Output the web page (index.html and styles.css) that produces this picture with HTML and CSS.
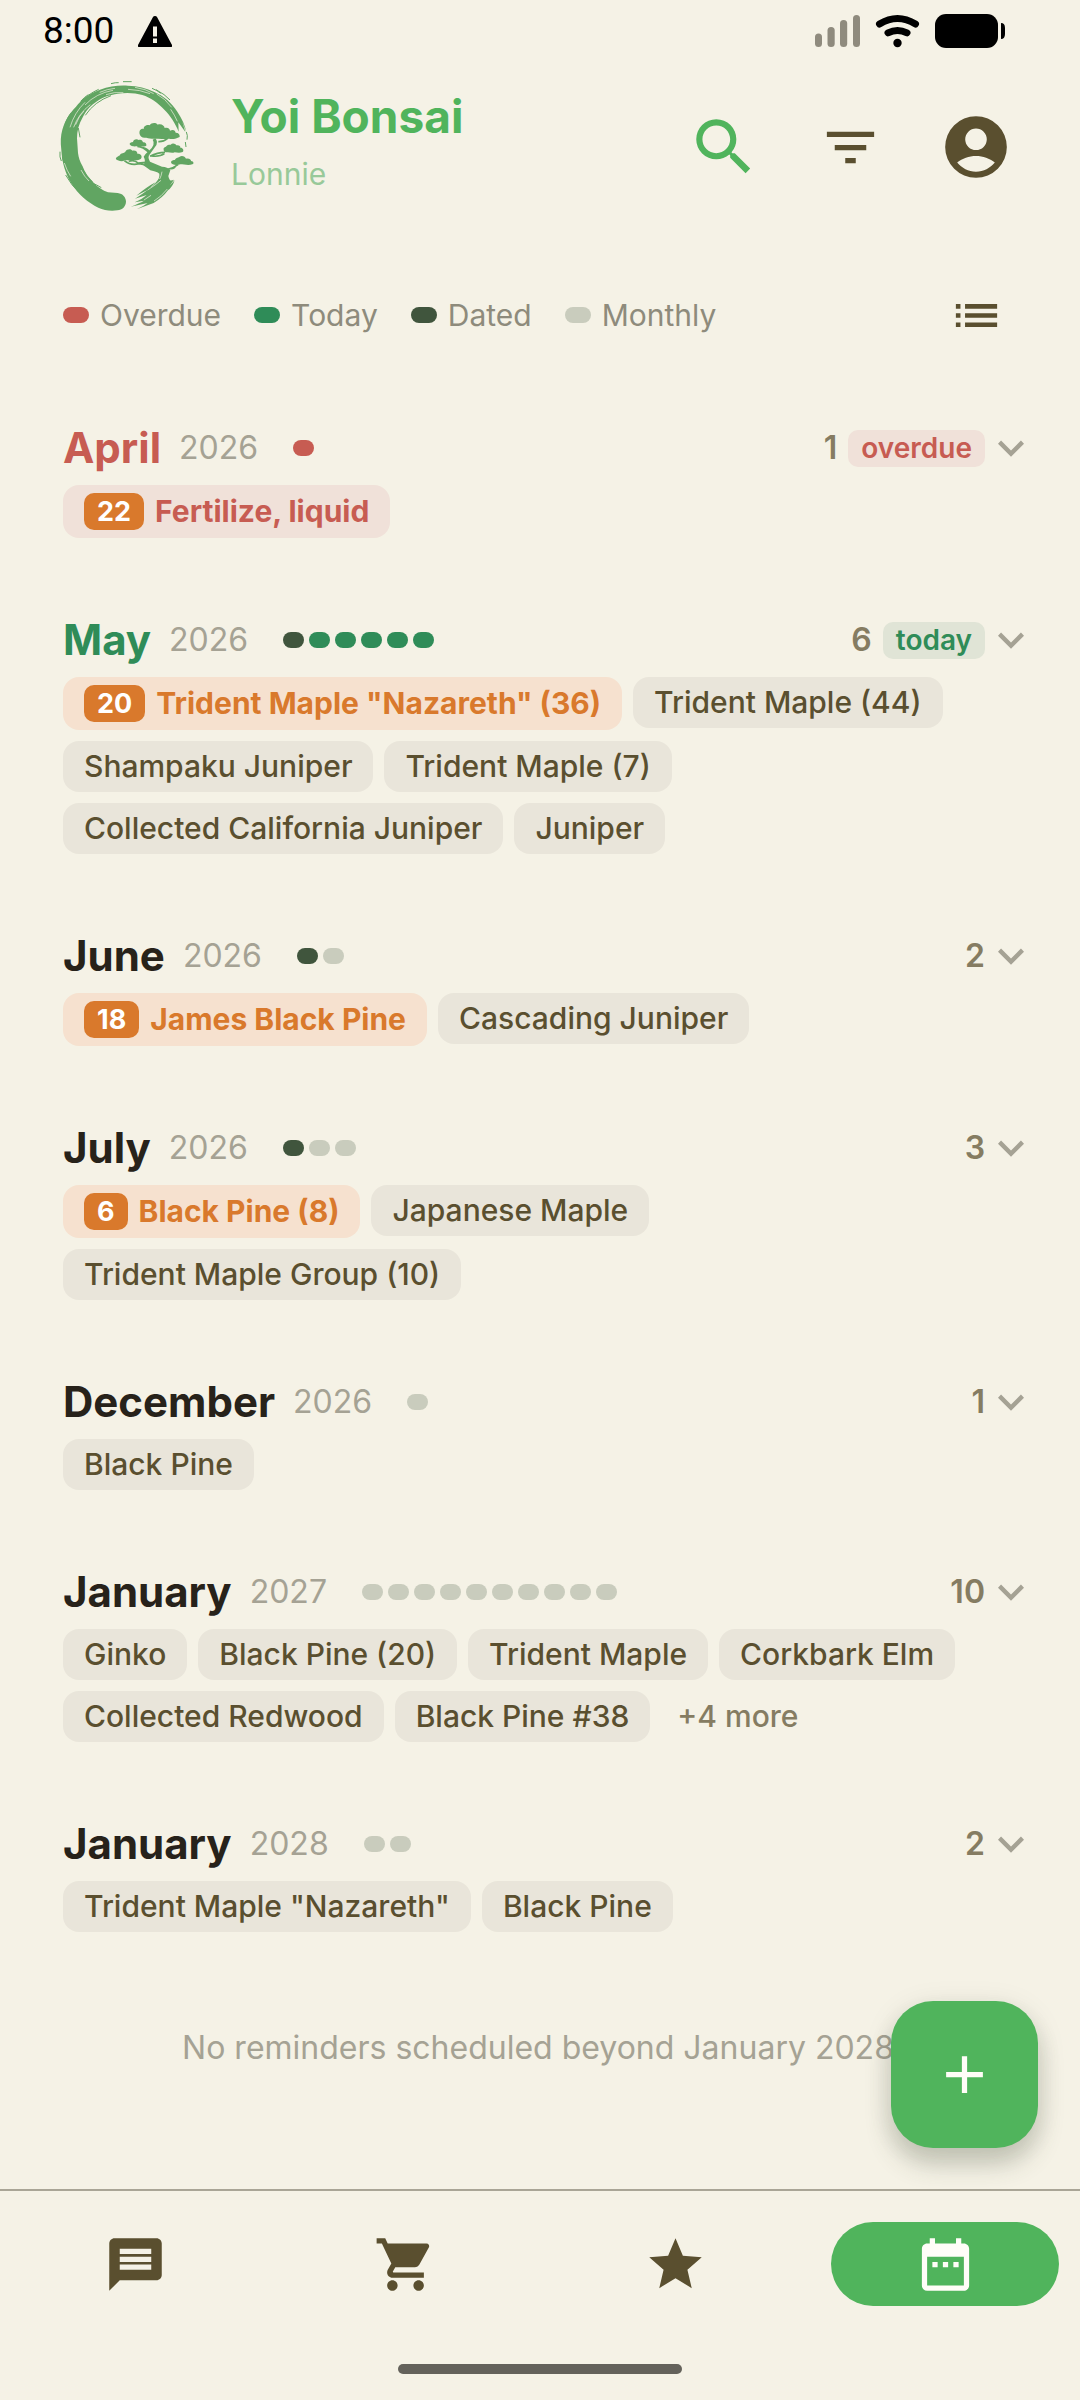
FILE: index.html
```html
<!DOCTYPE html>
<html lang="en">
<head>
<meta charset="utf-8">
<meta name="viewport" content="width=device-width, initial-scale=1">
<title>Yoi Bonsai</title>
<link rel="stylesheet" href="styles.css">
</head>
<body>
<svg width="0" height="0" class="defs" aria-hidden="true">
  <symbol id="chevron" viewBox="0 0 24 24"><path d="M16.59 8.59 12 13.17 7.41 8.59 6 10l6 6 6-6z"/></symbol>
</svg>
<div class="page">
  <div class="status">
    <span class="clock">8:00</span>
    <svg class="warn" viewBox="0 0 34 31" aria-label="Warning"><path d="M17 0q1.500 0 2 1l15 28q.5 2-1 2H1q-1.500 0-1-2L15 1q.5-1 2-1z"/><path class="cut" d="M15 10.500h4v10h-4zM15 22.500h4v4.500h-4z"/></svg>
    <svg class="signals" viewBox="0 0 190 34" aria-label="Signal, Wi-Fi and battery">
      <g class="weak"><rect x="0" y="19.500" width="7" height="13.500" rx="3.500"/><rect x="12.500" y="13" width="7.200" height="20" rx="3.500"/><rect x="25" y="6" width="7.200" height="27" rx="3.500"/><rect x="38" y="1" width="7" height="32" rx="3.500"/></g>
      <path class="arc" d="M64.500 10Q82.500-1 100.500 10M73 18.800q9.500-4.600 19 0"/><circle cx="82.500" cy="29" r="4.200"/>
      <rect x="120" y="0" width="63" height="34" rx="11"/><path d="M186 9q4 0 4 5v6q0 5-4 5z"/>
    </svg>
  </div>

  <header class="header">
    <svg class="logo" viewBox="0 12 510 498" aria-label="Bonsai tree inside a brushed circle">
      <path d="M258 424C258 440 247 450 232 451C212 454 192 451 175 443C145 429 113 402 94 370C76 341 66 307 64 270C61 245 62 226 67 209C75 182 88 160 108 140C125 118 150 99 180 89C208 79 237 75 264 77C293 78 320 84 343 96C372 108 395 129 412 155C426 176 435 195 439 217L427 185L436 216L415 187L416 215C407 192 391 166 373 149C354 129 332 113 307 105C286 98 256 97 234 101C208 104 183 113 164 129C150 138 137 154 129 170C116 192 111 213 111 235L114 279C116 293 120 306 127 317C135 338 147 354 161 368C174 382 188 391 204 397L233 399C249 401 257 412 258 424Z"/>
      <g class="streak">
        <path d="M120 129Q144 102 176 88M122 124Q132 112 145 104M213 71Q227 67 236 68M249 65L275 65M336 85Q352 91 362 100M348 89Q375 103 390 120M94 158Q83 170 76 190M99 161Q88 175 82 193M60 275Q58 292 64 303M67 290Q68 298 71 307M77 345Q94 377 120 399M439 216Q444 226 441 239M436 246L438 261M123 315Q135 347 158 366M158 370Q168 373 184 383M136 166Q163 125 213 107M120 232L115 204"/>
      </g>
      <path class="cutline" d="M90 202Q103 158 135 127M101 202Q116 160 151 134M107 194Q117 167 132 153M135 135Q168 100 219 91M198 104Q222 95 250 98M264 88Q300 89 330 101M285 82Q318 87 341 101M350 102Q375 115 395 142M392 148Q404 165 412 184M123 330Q133 350 147 363M73 309Q81 333 92 349M179 97Q202 87 225 85"/>
      <path d="M299 223C296 210 305 205 312 207C308 199 322 193 329 196C334 187 350 188 353 194C364 190 373 197 374 204C384 201 390 207 390 212C400 207 406 212 407 218C416 218 420 224 419 231C409 236 398 239 387 236C377 239 365 236 354 236C341 236 329 237 319 233C307 235 302 231 299 223Z"/>
      <path d="M269 253C269 246 277 247 279 246C279 239 290 235 296 240C304 236 309 244 309 247C316 246 320 251 319 257C310 261 298 259 290 259C282 260 272 259 269 253Z"/>
      <path d="M371 269C369 262 379 261 379 259C382 253 390 254 392 254C397 248 406 250 409 256C417 254 422 259 421 263C428 262 433 271 428 276C420 280 411 278 404 277C395 281 388 276 382 277C374 277 371 275 371 269Z"/>
      <path d="M228 298C226 291 238 288 240 285C243 278 252 281 256 275C261 265 275 266 277 272C288 270 293 277 292 281C302 281 307 287 304 294C302 299 293 302 285 300L254 301C247 306 234 303 228 298Z"/>
      <path d="M393 307C393 301 401 300 405 299C408 292 417 293 419 290C427 285 436 291 438 296C449 294 454 301 453 303C462 304 462 312 457 313C446 318 431 313 421 313C410 317 394 315 393 307Z"/>
      <path d="M346 235Q357 247 345 261L330 282Q321 291 330 305L366 320Q383 320 391 331L385 348Q386 355 390 361Q395 362 402 359L389 377L404 361Q397 382 384 391Q368 413 341 429L290 448Q311 438 323 429L272 440Q298 430 312 422L284 427Q308 416 320 405L285 416Q314 397 324 389L289 407Q321 380 348 366Q360 355 358 341Q350 335 331 331L310 316Q319 304 311 290Q317 280 327 272Q348 254 338 239Z"/>
      <g class="branch"><path d="M355 245Q370 246 383 235M292 259Q310 260 325 276M308 263Q322 266 328 276M330 289Q352 277 375 277M373 281Q360 291 334 288M253 302Q273 318 297 311L318 315M266 304Q283 298 294 309L318 307M383 328Q401 324 414 314M390 326Q403 328 409 315"/></g>
      <path class="cutline" d="M354 354Q348 370 333 382M366 335Q364 348 359 357M323 390Q348 374 363 361M342 423Q365 409 382 387M312 420L333 406"/>
    </svg>
    <div class="brand">
      <h1 class="title">Yoi Bonsai</h1>
      <p class="owner">Lonnie</p>
    </div>
    <button class="iconbtn search" aria-label="Search"><svg class="i-lg" viewBox="0 0 24 24"><path d="M15.500 14h-.79l-.28-.27A6.471 6.471 0 0 0 16 9.500 6.500 6.500 0 1 0 9.500 16c1.610 0 3.090-.59 4.230-1.570l.27.28v.79l5 4.990L20.490 19l-4.990-5zm-6 0C7.010 14 5 11.990 5 9.500S7.010 5 9.500 5 14 7.010 14 9.500 11.990 14 9.500 14z"/></svg></button>
    <button class="iconbtn" aria-label="Filter"><svg class="i-md" viewBox="0 0 24 24"><path d="M10 18h4v-2h-4v2zM3 6v2h18V6H3zm3 7h12v-2H6v2z"/></svg></button>
    <button class="iconbtn" aria-label="Account"><svg class="i-lg" viewBox="0 0 24 24"><path fill-rule="evenodd" d="M12 2a10 10 0 1 0 0 20 10 10 0 0 0 0-20zm0 4a3.500 3.500 0 1 1 0 7 3.500 3.500 0 0 1 0-7zm0 14c-2.500 0-4.600-1.200-6.100-3 1.700-1.300 3.800-2.100 6.100-2.100s4.400.8 6.100 2.100c-1.500 1.800-3.600 3-6.100 3z"/></svg></button>
  </header>

  <div class="legend">
    <ul class="keys">
      <li><i class="key overdue"></i>Overdue</li>
      <li><i class="key today"></i>Today</li>
      <li><i class="key dated"></i>Dated</li>
      <li><i class="key monthly"></i>Monthly</li>
    </ul>
    <button class="iconbtn" aria-label="List view"><svg class="i-sm" viewBox="0 0 24 24"><path d="M3 13h2v-2H3v2zm0 4h2v-2H3v2zm0-8h2V7H3v2zm4 4h14v-2H7v2zm0 4h14v-2H7v2zM7 7v2h14V7H7z"/></svg></button>
  </div>

  <main class="months">
    <section class="month">
      <div class="head"><h2 class="name is-overdue">April</h2><span class="year">2026</span><span class="dots"><i class="dot overdue"></i></span><span class="count">1</span><span class="tag is-overdue">overdue</span><button class="expand" aria-label="Expand April 2026"><svg viewBox="0 0 24 24"><use href="#chevron"/></svg></button></div>
      <div class="chips"><button class="chip late"><b class="day">22</b>Fertilize, liquid</button></div>
    </section>
    <section class="month">
      <div class="head"><h2 class="name is-today">May</h2><span class="year">2026</span><span class="dots"><i class="dot dated"></i><i class="dot today"></i><i class="dot today"></i><i class="dot today"></i><i class="dot today"></i><i class="dot today"></i></span><span class="count">6</span><span class="tag is-today">today</span><button class="expand" aria-label="Expand May 2026"><svg viewBox="0 0 24 24"><use href="#chevron"/></svg></button></div>
      <div class="chips"><button class="chip due"><b class="day">20</b>Trident Maple "Nazareth" (36)</button><button class="chip">Trident Maple (44)</button><button class="chip">Shampaku Juniper</button><button class="chip">Trident Maple (7)</button><button class="chip">Collected California Juniper</button><button class="chip">Juniper</button></div>
    </section>
    <section class="month">
      <div class="head"><h2 class="name">June</h2><span class="year">2026</span><span class="dots"><i class="dot dated"></i><i class="dot monthly"></i></span><span class="count">2</span><button class="expand" aria-label="Expand June 2026"><svg viewBox="0 0 24 24"><use href="#chevron"/></svg></button></div>
      <div class="chips"><button class="chip due"><b class="day">18</b>James Black Pine</button><button class="chip">Cascading Juniper</button></div>
    </section>
    <section class="month">
      <div class="head"><h2 class="name">July</h2><span class="year">2026</span><span class="dots"><i class="dot dated"></i><i class="dot monthly"></i><i class="dot monthly"></i></span><span class="count">3</span><button class="expand" aria-label="Expand July 2026"><svg viewBox="0 0 24 24"><use href="#chevron"/></svg></button></div>
      <div class="chips"><button class="chip due"><b class="day">6</b>Black Pine (8)</button><button class="chip">Japanese Maple</button><button class="chip">Trident Maple Group (10)</button></div>
    </section>
    <section class="month">
      <div class="head"><h2 class="name">December</h2><span class="year">2026</span><span class="dots"><i class="dot monthly"></i></span><span class="count">1</span><button class="expand" aria-label="Expand December 2026"><svg viewBox="0 0 24 24"><use href="#chevron"/></svg></button></div>
      <div class="chips"><button class="chip">Black Pine</button></div>
    </section>
    <section class="month">
      <div class="head"><h2 class="name">January</h2><span class="year">2027</span><span class="dots"><i class="dot monthly"></i><i class="dot monthly"></i><i class="dot monthly"></i><i class="dot monthly"></i><i class="dot monthly"></i><i class="dot monthly"></i><i class="dot monthly"></i><i class="dot monthly"></i><i class="dot monthly"></i><i class="dot monthly"></i></span><span class="count">10</span><button class="expand" aria-label="Expand January 2027"><svg viewBox="0 0 24 24"><use href="#chevron"/></svg></button></div>
      <div class="chips"><button class="chip">Ginko</button><button class="chip">Black Pine (20)</button><button class="chip">Trident Maple</button><button class="chip">Corkbark Elm</button><button class="chip">Collected Redwood</button><button class="chip">Black Pine #38</button><button class="chip more">+4 more</button></div>
    </section>
    <section class="month">
      <div class="head"><h2 class="name">January</h2><span class="year">2028</span><span class="dots"><i class="dot monthly"></i><i class="dot monthly"></i></span><span class="count">2</span><button class="expand" aria-label="Expand January 2028"><svg viewBox="0 0 24 24"><use href="#chevron"/></svg></button></div>
      <div class="chips"><button class="chip">Trident Maple "Nazareth"</button><button class="chip">Black Pine</button></div>
    </section>
    <p class="end">No reminders scheduled beyond January 2028</p>
  </main>

  <nav class="nav">
    <div class="tabs">
      <a class="tab" href="#notes" aria-label="Notes"><svg class="i-md" viewBox="0 0 24 24"><path d="M20 2H4c-1.100 0-1.990.9-1.990 2L2 22l4-4h14c1.100 0 2-.9 2-2V4c0-1.100-.9-2-2-2zm-2 12H6v-2h12v2zm0-3H6V9h12v2zm0-3H6V6h12v2z"/></svg></a>
      <a class="tab" href="#shop" aria-label="Shop"><svg class="i-md" viewBox="0 0 24 24"><path d="M7 18c-1.100 0-1.990.9-1.990 2S5.900 22 7 22s2-.9 2-2-.9-2-2-2zM1 2v2h2l3.600 7.590-1.350 2.450c-.16.28-.25.61-.25.960 0 1.100.9 2 2 2h12v-2H7.420c-.14 0-.25-.11-.25-.25l.03-.12.900-1.630h7.450c.75 0 1.410-.41 1.750-1.030l3.580-6.490A1.003 1.003 0 0 0 20 4H5.210l-.94-2H1zm16 16c-1.100 0-1.990.9-1.990 2s.89 2 1.990 2 2-.9 2-2-.9-2-2-2z"/></svg></a>
      <a class="tab" href="#favourites" aria-label="Favourites"><svg class="i-md" viewBox="0 0 24 24"><path d="M12 17.270 18.180 21l-1.640-7.030L22 9.240l-7.190-.61L12 2 9.190 8.630 2 9.240l5.460 4.730L5.820 21z"/></svg></a>
      <a class="tab current" href="#calendar" aria-label="Calendar" aria-current="page"><svg class="i-md" viewBox="0 0 24 24"><path d="M9 11H7v2h2v-2zm4 0h-2v2h2v-2zm4 0h-2v2h2v-2zm2-7h-1V2h-2v2H8V2H6v2H5c-1.110 0-1.990.9-1.990 2L3 20a2 2 0 0 0 2 2h14c1.100 0 2-.9 2-2V6c0-1.100-.9-2-2-2zm0 16H5V9h14v11z"/></svg></a>
    </div>
    <div class="homebar"></div>
  </nav>
  <button class="fab" aria-label="Add reminder"><svg class="i-md" viewBox="0 0 24 24"><path d="M19 13h-6v6h-2v-6H5v-2h6V5h2v6h6z"/></svg></button>
</div>
</body>
</html>
```
FILE: styles.css
```css
:root {
  --bg: #f5f2e6;
  --green: #50b45c;
  --brown: #5a4f2f;
  --muted: #a5a294;
  --count: #857c62;
  --overdue: #c75c52;
  --today: #2f8c58;
  --dated: #40553d;
  --monthly: #c9ccbd;
  --orange: #d9792c;
}

* { box-sizing: border-box; }

body {
  margin: 0;
  background: var(--bg);
  color: var(--brown);
  font-family: Inter, "Liberation Sans", sans-serif;
  font-size: 30px;
}

h1, h2, p, ul { margin: 0; padding: 0; }

button {
  border: 0;
  padding: 0;
  background: none;
  color: inherit;
  font: inherit;
  cursor: pointer;
}

svg { display: block; fill: currentColor; }

.defs { position: absolute; }

.page {
  min-height: 100vh;
  display: flex;
  flex-direction: column;
}

/* status bar */
.status {
  display: flex;
  align-items: center;
  height: 64px;
  padding: 0 75px 2px 43px;
  color: #000;
}

.clock {
  font-family: Roboto, sans-serif;
  font-size: 37px;
  line-height: 58px;
}

.warn { width: 34px; height: 31px; margin-left: 24px; }
.warn .cut { fill: var(--bg); }
.signals { width: 190px; height: 34px; margin-left: auto; }
.weak { fill: #8f8b7e; }
.arc { fill: none; stroke: #000; stroke-width: 7; stroke-linecap: round; }

/* header */
.header {
  display: flex;
  align-items: center;
  height: 166px;
  padding: 0 41px 0 40px;
}

.logo { width: 170px; height: 166px; color: #61a562; }
.logo .streak { fill: none; stroke: currentColor; stroke-width: 3; }
.logo .branch { fill: none; stroke: currentColor; stroke-width: 5; }
.logo .cutline { fill: none; stroke: var(--bg); stroke-width: 2; }

.brand { flex: 1; margin-left: 21px; padding-bottom: 4px; }

.title {
  color: var(--green);
  font-size: 46px;
  font-weight: 700;
  line-height: 58px;
}

.owner {
  color: #98c999;
  font-size: 30px;
  line-height: 58px;
}

.iconbtn {
  display: flex;
  align-items: center;
  justify-content: center;
  width: 126px;
  height: 126px;
}

.search { color: var(--green); }
.i-lg { width: 74px; height: 74px; }
.i-md { width: 63px; height: 63px; }
.i-sm { width: 55px; height: 55px; }

/* legend */
.legend {
  display: flex;
  align-items: center;
  justify-content: space-between;
  height: 170px;
  padding: 0 41px 0 63px;
}

.keys {
  display: flex;
  gap: 33px;
  color: #8e8b7c;
  list-style: none;
}

.keys li { display: flex; align-items: center; gap: 11px; }
.key { width: 26px; height: 16px; border-radius: 8px; }
.dot { width: 21px; height: 16px; border-radius: 8px; }
.overdue { background: var(--overdue); }
.today { background: var(--today); }
.dated { background: var(--dated); }
.monthly { background: var(--monthly); }

/* months */
.months {
  flex: 1;
  display: flex;
  flex-direction: column;
  gap: 75px;
  padding: 21px 43px 75px 63px;
}

.month { display: flex; flex-direction: column; gap: 10px; }

.head {
  display: flex;
  align-items: center;
  height: 54px;
  line-height: 54px;
}

.name { color: #27221a; font-size: 42px; font-weight: 700; }
.name.is-overdue { color: var(--overdue); }
.name.is-today { color: var(--today); }

.year { margin-left: 18px; color: var(--muted); font-size: 32px; }
.dots { display: flex; gap: 5px; margin-left: 35px; }
.count { margin-left: auto; color: var(--count); font-size: 32px; font-weight: 600; }

.tag {
  margin-left: 11px;
  padding: 0 13px;
  border-radius: 10px;
  font-size: 28px;
  font-weight: 600;
  line-height: 37px;
}

.tag.is-overdue { background: #f0e1d9; color: var(--overdue); }
.tag.is-today { background: #e0e4d6; color: var(--today); }

.expand { color: var(--muted); }
.expand svg { width: 52px; height: 52px; }

.chips {
  display: flex;
  flex-wrap: wrap;
  align-items: flex-start;
  gap: 11px;
  padding-right: 21px;
}

.chip {
  display: flex;
  align-items: center;
  gap: 11px;
  padding: 0 21px;
  border-radius: 16px;
  background: #e9e5da;
  font-weight: 500;
  line-height: 51px;
}

.chip.late, .chip.due { font-weight: 700; line-height: 53px; }
.chip.late { background: #f0e1d9; color: var(--overdue); }
.chip.due { background: #f6e1cf; color: var(--orange); }
.chip.more { padding: 0 16px; background: none; color: var(--count); }

.day {
  padding: 0 13px;
  border-radius: 10px;
  background: var(--orange);
  color: #fff;
  font-size: 27px;
  font-weight: 700;
  line-height: 37px;
}

.end {
  padding: 14px 24px 12px 0;
  color: var(--muted);
  font-size: 32px;
  line-height: 54px;
  text-align: center;
}

/* bottom navigation */
.nav { border-top: 2px solid #a9a596; background: var(--bg); }

.tabs {
  display: grid;
  grid-template-columns: repeat(4, 1fr);
  padding-top: 31px;
}

.tab {
  display: flex;
  align-items: center;
  justify-content: center;
  height: 84px;
  margin: 0 21px;
  border-radius: 42px;
  color: var(--brown);
}

.tab.current { background: var(--green); color: #fffdf8; }

.homebar {
  width: 284px;
  height: 10px;
  margin: 58px auto 26px;
  border-radius: 5px;
  background: #64625b;
}

/* floating over the list */
.fab {
  position: fixed;
  right: 42px;
  bottom: 252px;
  display: flex;
  align-items: center;
  justify-content: center;
  width: 147px;
  height: 147px;
  border-radius: 42px;
  background: var(--green);
  color: #fffdf8;
  box-shadow: 0 16px 26px rgba(60, 70, 50, .24), 0 6px 30px rgba(60, 70, 50, .1);
}
```
